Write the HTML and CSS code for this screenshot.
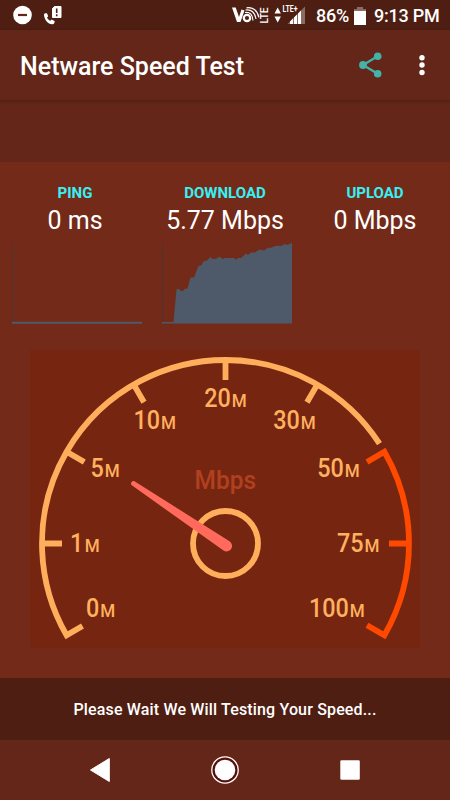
FILE: index.html
```html
<!DOCTYPE html>
<html lang="en">
<head>
<meta charset="utf-8">
<title>Netware Speed Test</title>
<link rel="stylesheet" href="styles.css">
</head>
<body>
<header class="status">
  <svg class="notifications" width="64" height="30" viewBox="0 0 64 30">
    <circle cx="22.500" cy="15" r="9.300" fill="#fff"/>
    <path d="M18 15h9" stroke="#632618" stroke-width="2.200"/>
    <path d="M44 14.500c0-1.200 2.800-1.800 3.200-.8l1 2.600-1.200 1.400c1 1.500 1.800 2.300 3.200 3l1.500-1.200 2.800 1.500c.7.700-.3 3-1.500 3.200C48.500 25 44 19.500 44 14.500z" fill="#fff"/>
    <path d="M54.500 6.500h6.500v11h-8.500V8.500z" fill="#fff" stroke="#fff" stroke-linejoin="round"/>
    <path d="M56.700 8.500v4.500M56.700 14.300v2" stroke="#4e1e12" stroke-width="1.600"/>
  </svg>
  <div class="indicators">
    <svg width="79" height="30" viewBox="0 0 79 30">
      <path d="M0 7.500H3.700L7 17 9.500 9.500 12.500 10.500 8.500 22H5z" fill="#fff"/>
      <circle cx="15" cy="18" r="3.200" fill="none" stroke="#fff" stroke-width="2.200"/>
      <path d="M13 12.500c5-.8 7.500 2 8 8M13.500 10c6-1 9.500 2.500 10.500 9M14.500 7.800c6-1 11 2.500 12.300 9.500" fill="none" stroke="#fff" stroke-width="1.200"/>
      <text class="lte-side" transform="translate(36 23.500) rotate(-90)" textLength="16" lengthAdjust="spacingAndGlyphs">LTE</text>
      <path d="M42.500 13.500l3.200-6 3.200 6zM42.500 16.500l3.200 6 3.200-6z" fill="#fff"/>
      <text class="lte" x="50.500" y="11.500" textLength="15" lengthAdjust="spacingAndGlyphs">LTE+</text>
      <path d="M55.500 24L73 6.500V24z" fill="#8b6b62"/>
      <path d="M58 24v-2.500l3-3V24zM62 24v-6.500l3-3V24zM66 24V13.500l3-3V24z" fill="#fff"/>
    </svg>
    <span class="percent">86%</span>
    <svg class="battery" width="12" height="18" viewBox="0 0 12 18">
      <path d="M0 2h3V0h6v2h3v3H0z" fill="#8b6b62"/>
      <path d="M0 4h12v14H0z" fill="#fff"/>
    </svg>
    <span class="clock">9:13 PM</span>
  </div>
</header>

<div class="appbar">
  <h1 class="title">Netware Speed Test</h1>
  <svg class="share" width="24" height="28" viewBox="0 0 24 28">
    <path d="M18.700 5.200L4 14l14.700 8.700" fill="none" stroke="#42b3a6" stroke-width="2.300"/>
    <g fill="#42b3a6"><circle cx="18.700" cy="5.200" r="3.800"/><circle cx="4" cy="14" r="3.900"/><circle cx="18.700" cy="22.700" r="3.800"/></g>
  </svg>
  <svg class="more" width="6" height="22" viewBox="0 0 6 22" fill="#fff">
    <circle cx="3" cy="3.700" r="2.700"/><circle cx="3" cy="11" r="2.700"/><circle cx="3" cy="18.500" r="2.700"/>
  </svg>
</div>

<div class="banner"></div>

<main class="content">
  <section class="stats">
    <div class="stat">
      <div class="label">PING</div>
      <div class="value">0 ms</div>
      <svg class="chart" width="130" height="81" viewBox="0 0 130 81">
        <path d="M.5 0v81" stroke="#4f3233"/>
        <path d="M0 79.700h130" stroke="#4e5a69" stroke-width="2"/>
      </svg>
    </div>
    <div class="stat">
      <div class="label">DOWNLOAD</div>
      <div class="value">5.77 Mbps</div>
      <svg class="chart" width="130" height="81" viewBox="0 0 130 81">
        <path d="M.5 0v81" stroke="#4f3233"/>
        <path d="M0 79h11.500L14.500 46.500 17 45.800 18.500 48 21 48 22.500 46 25.500 45.500 28.500 34.500H32L36.500 23 39 22.500 42 18 45 17.500 48.500 14 50.500 16H54L57.500 13.500 60.500 16 63 15H72L74 17 76 15H79L84 10.500 86 12 89 9.500H93L97 6.800H99L102 7.500 106 4.800H109L114 2.700 119 3 123 1 125 2 130 0V80.500H0z" fill="#4e5a69"/>
      </svg>
    </div>
    <div class="stat">
      <div class="label">UPLOAD</div>
      <div class="value">0 Mbps</div>
    </div>
  </section>

  <svg class="gauge" width="390" height="298" viewBox="30 350 390 298">
    <g class="scale">
      <path d="M82.500 626L66.600 635.250A183.500 183.500 0 0 1 225.500 360A183.500 183.500 0 0 1 379.500 443.700"/>
      <path d="M42 543.500H62M66.600 451.750L84.300 462M133.750 384.600L144 402.300M225.500 360V380M317.250 384.600L307 402.300"/>
      <path class="high" d="M367 462L384.400 451.750A183.500 183.500 0 0 1 384.400 635.250L367 625.200M389 543.500H409"/>
      <circle cx="225.500" cy="543.500" r="32.500"/>
    </g>
    <g class="num">
      <text transform="translate(86 616.700) scale(.9 1)">0<tspan class="unit" dx="1">M</tspan></text>
      <text transform="translate(70 551.700) scale(.9 1)">1<tspan class="unit" dx="1.500">M</tspan></text>
      <text transform="translate(90.500 476.700) scale(.9 1)">5<tspan class="unit" dx="1">M</tspan></text>
      <text transform="translate(133.500 428.500) scale(.9 1)">10<tspan class="unit" dx="1">M</tspan></text>
      <text transform="translate(204.200 407) scale(.9 1)">20<tspan class="unit" dx="1">M</tspan></text>
      <text transform="translate(273.200 428.500) scale(.9 1)">30<tspan class="unit" dx="1">M</tspan></text>
      <text transform="translate(317.300 476.700) scale(.9 1)">50<tspan class="unit" dx="1">M</tspan></text>
      <text transform="translate(337 551.700) scale(.9 1)">75<tspan class="unit" dx="1">M</tspan></text>
      <text transform="translate(309 616.700) scale(.9 1)">100<tspan class="unit" dx="1">M</tspan></text>
    </g>
    <text class="mbps" x="194.500" y="488.500" textLength="61.500" lengthAdjust="spacingAndGlyphs">Mbps</text>
    <path d="M134.500 481.200L229.500 541.300A5.500 5.500 0 0 1 223.500 550.600L131.800 485.300A2.500 2.500 0 0 1 134.500 481.200z" fill="#ff6a5c"/>
  </svg>
</main>

<div class="message">Please Wait We Will Testing Your Speed...</div>

<nav class="nav">
  <svg width="450" height="60" viewBox="0 0 450 60" fill="#fff">
    <path d="M90.500 30L109.300 18.500V41.500z" stroke="#fff" stroke-linejoin="round"/>
    <circle cx="225" cy="30" r="13.200" fill="#5a0e0a" stroke="#fff" stroke-width="1.300"/>
    <circle cx="225" cy="30" r="10.300"/>
    <rect x="340.300" y="20.300" width="19.500" height="19.500" rx="1.200"/>
  </svg>
</nav>
</body>
</html>
```
FILE: styles.css
```css
* { box-sizing: border-box; }
body {
  margin: 0;
  width: 450px;
  height: 800px;
  display: flex;
  flex-direction: column;
  overflow: hidden;
  background: #742a18;
  color: #fff;
  font-family: Roboto, "Liberation Sans", sans-serif;
}
svg { display: block; flex: none; }
.status {
  height: 30px;
  flex: none;
  display: flex;
  justify-content: space-between;
  background: #4e1e12;
}
.indicators {
  display: flex;
  align-items: center;
  padding-right: 10px;
  font-size: 18px;
  font-weight: 500;
  line-height: 20px;
  white-space: nowrap;
}
.percent { width: 34px; margin: 1px 0 0 5px; letter-spacing: -.2px; }
.battery { margin: 1px 8px 0 4px; }
.clock { width: 66px; margin-top: 1px; letter-spacing: -.25px; }
.lte-side { font-size: 10px; font-weight: 500; fill: #fff; }
.lte { font-size: 9px; font-weight: 700; fill: #fff; }
.appbar {
  height: 70px;
  flex: none;
  display: flex;
  align-items: center;
  padding: 0 25px 0 20px;
  background: #632618;
  box-shadow: 0 1px 3px rgba(0, 0, 0, .25);
  position: relative;
}
.title {
  margin: 3px auto 0 0;
  font-size: 25px;
  line-height: 30px;
  font-weight: 500;
  white-space: nowrap;
}
.share { margin-right: 36px; }
.banner { height: 62px; flex: none; background: #632618; }
.content { height: 516px; flex: none; }
.stats { height: 188px; display: flex; padding-top: 22px; }
.stat { width: 150px; text-align: center; }
.label {
  font-size: 15px;
  line-height: 18px;
  font-weight: 700;
  color: #36f1f5;
}
.value { font-size: 25px; line-height: 30px; margin-top: 4px; white-space: nowrap; }
.chart { margin: 7px 0 0 12px; }
.gauge { margin-left: 30px; background: #762610; }
.scale { fill: none; stroke: #ffae5c; stroke-width: 5.800px; }
.scale .high { stroke: #ff4800; }
.num { font-size: 26px; font-weight: 500; fill: #ffb15f; }
.unit { font-size: 19px; }
.mbps { font-size: 26px; font-weight: 500; fill: #b1401f; }
.message {
  height: 62px;
  flex: none;
  padding-top: 1px;
  background: #4e1e12;
  text-align: center;
  font-size: 16px;
  line-height: 62px;
  font-weight: 500;
  letter-spacing: .16px;
}
.nav { height: 60px; flex: none; background: #632618; }
```
